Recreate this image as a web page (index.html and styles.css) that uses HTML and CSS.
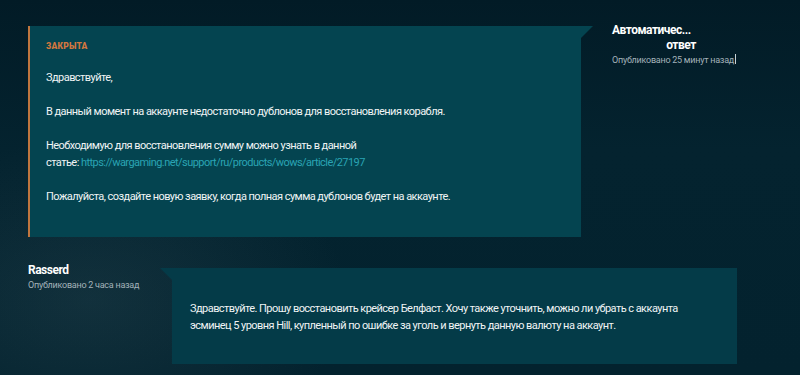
FILE: index.html
```html
<!DOCTYPE html>
<html lang="ru">
<head>
    <meta charset="UTF-8">
    <meta name="viewport" content="width=device-width, initial-scale=1.0">
    <title>Заявка</title>
    <link rel="stylesheet" href="styles.css">
</head>
<body>

    <div class="thread">
        <!-- Support reply -->
        <div class="message message-support">
            <div class="bubble bubble-closed">
                <div class="status">Закрыта</div>
                <p>Здравствуйте,</p>
                <p>В данный момент на аккаунте недостаточно дублонов для восстановления корабля.</p>
                <p>Необходимую для восстановления сумму можно узнать в данной<br>статье: <a href="#">https://wargaming.net/support/ru/products/wows/article/27197</a></p>
                <p>Пожалуйста, создайте новую заявку, когда полная сумма дублонов будет на аккаунте.</p>
            </div>
            <div class="meta meta-right">
                <div class="author">Автоматичес...</div>
                <div class="author author-center">ответ</div>
                <div class="date">Опубликовано 25 минут назад<span class="caret"></span></div>
            </div>
        </div>

        <!-- User message -->
        <div class="message message-user">
            <div class="meta meta-left">
                <div class="author">Rasserd</div>
                <div class="date">Опубликовано 2 часа назад</div>
            </div>
            <div class="bubble bubble-user">
                <p>Здравствуйте. Прошу восстановить крейсер Белфаст. Хочу также уточнить, можно ли убрать с аккаунта<br>эсминец 5 уровня Hill, купленный по ошибке за уголь и вернуть данную валюту на аккаунт.</p>
            </div>
        </div>
    </div>

</body>
</html>
```

FILE: styles.css
```css
/* Page background */
body {
    margin: 0;
    font-family: Roboto, 'Liberation Sans', sans-serif;
    color: #f0f4f5;
    height: 375px;
    overflow: hidden;
    background-color: #03212d;
    background-image:
        radial-gradient(ellipse 260px 160px at 90px 300px, rgba(70, 100, 110, 0.22), rgba(0, 0, 0, 0)),
        linear-gradient(180deg, #021b26 0%, #04232f 40%, #03222e 100%);
}

.thread {
    padding: 26px 0 0 28px;
}

.message {
    display: flex;
    align-items: flex-start;
}

.message-user {
    margin-top: 31px;
}

/* Bubbles */
.bubble {
    position: relative;
    box-sizing: border-box;
}

.bubble p {
    margin: 17px 0 0;
    font-size: 11px;
    line-height: 17px;
    letter-spacing: -0.55px;
}

.bubble a {
    color: #2aa4b4;
    text-decoration: none;
}

.bubble-closed {
    width: 553px;
    background-color: #044450;
    border-left: 2px solid #c0763f;
    padding: 14px 16px 32px 16px;
}

/* tail top right */
.bubble-closed::after {
    content: "";
    position: absolute;
    top: 0;
    right: -12px;
    width: 12px;
    height: 12px;
    background-color: #044450;
    clip-path: polygon(0 0, 100% 0, 0 100%);
}

.bubble-user {
    width: 565px;
    background-color: #043b48;
    padding: 15px 18px 30px 18px;
}

/* tail top left */
.bubble-user::before {
    content: "";
    position: absolute;
    top: 0;
    left: -12px;
    width: 12px;
    height: 12px;
    background-color: #043b48;
    clip-path: polygon(0 0, 100% 0, 100% 100%);
}

.status {
    font-size: 8.5px;
    line-height: 12px;
    font-weight: 900;
    letter-spacing: 0.2px;
    text-transform: uppercase;
    color: #d2773f;
}

/* Author / date */
.meta .author {
    font-size: 12px;
    line-height: 15px;
    font-weight: 700;
    letter-spacing: -0.5px;
    color: #ffffff;
}

.meta .date {
    font-size: 9px;
    line-height: 14px;
    letter-spacing: -0.25px;
    color: #a3b2b9;
}

.meta-right {
    width: 138px;
    margin: -3px 0 0 31px;
}

.author-center {
    text-align: center;
}

.caret {
    display: inline-block;
    width: 1px;
    height: 10px;
    margin-left: 1px;
    vertical-align: -1px;
    background-color: #c9d3d7;
}

.meta-left {
    width: 144px;
    margin-top: -5px;
}
```
